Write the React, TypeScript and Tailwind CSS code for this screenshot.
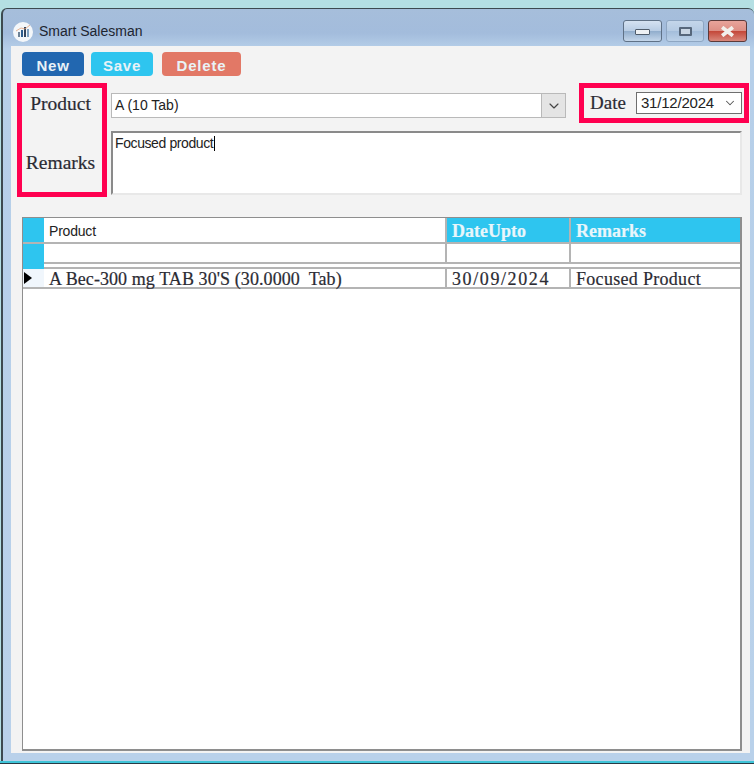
import type { ReactNode } from "react";
import { ChevronDown } from "lucide-react";

const SERIF = "font-['Liberation_Serif',serif] [-webkit-text-stroke:0.2px]";
const SANS = "font-['Liberation_Sans',Arial,sans-serif]";
const LINE = "border-[#b4b4b4]";

function AppIcon() {
  return (
    <svg viewBox="0 0 20 20" className="h-[20px] w-[20px]" aria-hidden="true">
      <circle cx="10" cy="10" r="10" fill="#f4f7fa" />
      <rect x="5" y="10" width="2" height="5" fill="#6d8296" />
      <rect x="8" y="8" width="2" height="7" fill="#2f5f8f" />
      <rect x="11" y="5" width="2" height="10" fill="#35475e" />
      <rect x="14" y="7" width="2" height="8" fill="#7fa2c2" />
      <path d="M3 9l5-3 4 1 5-4" fill="none" stroke="#e2a27a" strokeWidth="0.8" />
    </svg>
  );
}

function WindowButtons() {
  return (
    <div className="flex items-start gap-[4px] pt-[11px]">
      <div className="flex h-[22px] w-[39px] items-center justify-center rounded-[3px] border border-[#5f7186] bg-[linear-gradient(#d5e2f1_0%,#b9cde4_48%,#92aecd_52%,#c4d6ea_100%)]">
        <div className="mt-[2px] h-[6px] w-[15px] rounded-[1px] border border-[#4f5c6b] bg-[#eef1f4]" />
      </div>
      <div className="flex h-[22px] w-[38px] items-center justify-center rounded-[3px] border border-[#8ea6c2] bg-[linear-gradient(#c4d6ea_0%,#b5cbe3_48%,#a4bedb_52%,#bcd1e8_100%)]">
        <div className="h-[9px] w-[13px] rounded-[1px] border-2 border-[#56677b] bg-[#c9d6e4]" />
      </div>
      <div className="flex h-[22px] w-[39px] items-center justify-center rounded-[3px] border border-[#5b3a3a] bg-[linear-gradient(#e8a49b_0%,#dd8f85_48%,#c4483a_52%,#d9887c_100%)]">
        <svg viewBox="0 0 14 10" className="h-[11px] w-[15px]" aria-hidden="true">
          <path d="M2 1l10 8M12 1L2 9" stroke="#f2f0ec" strokeWidth="3.4" />
        </svg>
      </div>
    </div>
  );
}

function ActionButton({ label, className }: { label: string; className: string }) {
  return (
    <button className={`${className} ${SANS} h-[24px] rounded-[4px] pt-[3px] text-[15px] font-bold tracking-[0.8px] text-[#e9f2f7]`}>
      {label}
    </button>
  );
}

function GridRow({ cells, marker }: { cells: ReactNode[]; marker: ReactNode }) {
  return (
    <>
      {marker}
      <div className={`w-[403px] shrink-0 whitespace-pre border-r-2 ${LINE}`}>{cells[0]}</div>
      <div className={`w-[124px] shrink-0 border-r-2 ${LINE}`}>{cells[1]}</div>
      <div className="flex-1">{cells[2]}</div>
    </>
  );
}

const headCell = `${SERIF} h-full bg-[#2ec5ef] pl-[5px] text-[18px] font-bold leading-[26px] text-[#e9f6fb]`;
const dataCell = `${SERIF} pl-[5px] text-[18px] leading-[20px] text-[#2b2b33]`;

export default function App() {
  return (
    <div className="h-[764px] w-[754px] overflow-hidden bg-[#b4dfe3]">
      <div className="h-[8px]" />
      <div className="ml-[1px] flex h-[753px] w-[753px] flex-col rounded-t-[6px] border-l-2 border-t border-[#3d4a50] bg-[linear-gradient(#a6bedb_0px,#a3bcdc_24px,#b6cfe9_40px,#b9d1ea_100%)]">
        <div className="flex h-[37px] shrink-0 pl-[10px] pr-[7px]">
          <div className="flex items-center gap-[6px] pt-[8px]">
            <AppIcon />
            <span className={`${SANS} text-[14px] text-[#1d2530]`}>Smart Salesman</span>
          </div>
          <div className="ml-auto">
            <WindowButtons />
          </div>
        </div>

        <div className="ml-[8px] w-[739px] flex-none bg-[#f3f3f3] pl-[11px] pt-[6px]">
          <div className="flex h-[701px] flex-col">
            <div className="flex gap-[7px]">
              <ActionButton label="New" className="w-[62px] bg-[#2267b0]" />
              <ActionButton label="Save" className="w-[62px] bg-[#2ec5ef]" />
              <ActionButton label="Delete" className="ml-[2px] w-[79px] bg-[#e27866]" />
            </div>

            <div className="ml-[-5px] mt-[7px] flex">
              <div className={`${SERIF} flex h-[114px] w-[90px] shrink-0 flex-col items-center border-[5px] border-[#ff0050] pr-[3px] text-[19.5px] text-[#2b2b33]`}>
                <span className="mt-[4px] leading-[24px]">Product</span>
                <span className="mt-[35px] leading-[24px]">Remarks</span>
              </div>

              <div className="ml-[4px] flex flex-col">
                <div className="flex">
                  <div className="mt-[10px] flex h-[25px] w-[455px] border border-[#b9b9b9] bg-white">
                    <span className={`${SANS} flex-1 pl-[3px] pt-[3px] text-[14px] leading-[16px] text-[#222]`}>A (10 Tab)</span>
                    <div className="flex w-[24px] items-center justify-center border-l border-[#b9b9b9] bg-[#e4e4e4]">
                      <ChevronDown className="h-[16px] w-[16px] text-[#444]" strokeWidth={1.75} />
                    </div>
                  </div>
                  <div className="ml-[13px] flex h-[40px] w-[170px] items-center border-[5px] border-[#ff0050]">
                    <span className={`${SERIF} ml-[6px] text-[19px] text-[#2b2b33]`}>Date</span>
                    <div className="ml-[10px] flex h-[22px] w-[106px] items-center border border-[#6e6e6e] bg-white">
                      <span className={`${SANS} pl-[4px] text-[15px] tracking-[-0.2px] text-[#222]`}>31/12/2024</span>
                      <ChevronDown className="ml-auto mr-[4px] h-[14px] w-[14px] text-[#555]" strokeWidth={1.75} />
                    </div>
                  </div>
                </div>
                <div className="mt-[8px] h-[64px] w-[631px] border-2 border-b-[#e8e8e8] border-l-[#8a8a8a] border-r-[#e8e8e8] border-t-[#8a8a8a] bg-white">
                  <span className={`${SANS} block pl-[2px] text-[14px] leading-[18px] tracking-[-0.4px] text-[#222]`}>
                    Focused product
                    <span className="ml-[1px] inline-block h-[15px] w-px translate-y-[3px] bg-black" />
                  </span>
                </div>
              </div>
            </div>

            <div className="mt-[20px] flex h-[534px] w-[720px] flex-col border border-b-2 border-r-2 border-[#8e8e8e] bg-white">
              <div className={`flex h-[26px] border-b-2 ${LINE}`}>
                <GridRow
                  marker={<div className="w-[21px] bg-[#2ec5ef]" />}
                  cells={[
                    <span className={`${SANS} pl-[5px] text-[14px] leading-[26px] tracking-[-0.2px] text-[#222]`}>Product</span>,
                    <div className={headCell}>DateUpto</div>,
                    <div className={headCell}>Remarks</div>,
                  ]}
                />
              </div>
              <div className="flex h-[25px]">
                <div className="w-[21px] shrink-0 bg-[#2ec5ef]" />
                <div className="flex flex-1 flex-col">
                  <div className={`flex h-[20px] border-b-2 ${LINE}`}>
                    <div className={`w-[403px] shrink-0 border-r-2 ${LINE}`} />
                    <div className={`w-[124px] shrink-0 border-r-2 ${LINE}`} />
                  </div>
                  <div className={`h-[5px] border-b-2 ${LINE}`} />
                </div>
              </div>
              <div className={`flex h-[20px] border-b-2 ${LINE}`}>
                <GridRow
                  marker={
                    <div className="flex w-[21px] shrink-0 items-center bg-[#f0f6fc] pl-[1px]">
                      <div className="h-0 w-0 border-y-[6px] border-l-[8px] border-y-transparent border-l-black" />
                    </div>
                  }
                  cells={[
                    <div className={`${dataCell} tracking-[0.08px]`}>A Bec-300 mg TAB 30'S (30.0000  Tab)</div>,
                    <div className={`${dataCell} tracking-[1.6px]`}>30/09/2024</div>,
                    <div className={`${dataCell} tracking-[0.3px]`}>Focused Product</div>,
                  ]}
                />
              </div>
            </div>
          </div>
        </div>
      </div>
      <div className="h-[2px] bg-[#3fc4d8]" />
      <div className="h-[1px] bg-[#2a3a44]" />
    </div>
  );
}
